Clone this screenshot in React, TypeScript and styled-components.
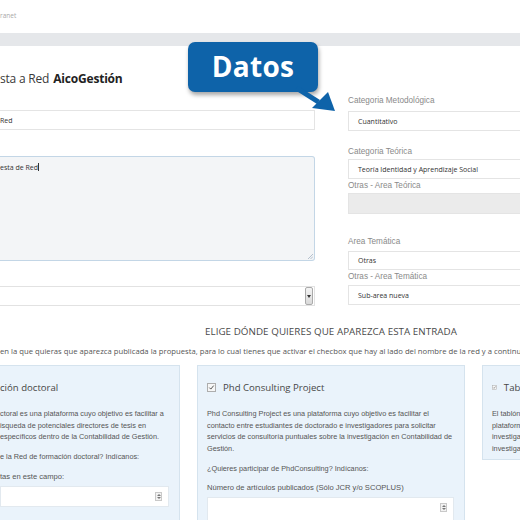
import React from 'react';
import styled, { createGlobalStyle } from 'styled-components';

const GlobalStyle = createGlobalStyle`
  html, body {
    margin:0;
    padding:0;
    background:#fff;
  }
  body {
    font-family:"Open Sans", "Liberation Sans", Arial, sans-serif;
    color:#444;
  }
`

const Page = styled.div`
  position:relative;
  width:520px;
  height:520px;
  overflow:hidden;
  background:#fff;
`

const TopHeader = styled.div`
  height:33px;
  display:flex;
  align-items:center;
  font-size:6.5px;
  color:#a9a9a9;
  span {
    margin-top:-3px;
  }
`

const GrayBar = styled.div`
  height:13px;
  background:#e5e7ea;
`

const FormGrid = styled.div`
  display:grid;
  grid-template-columns:315px 220px;
  column-gap:33px;
  width:570px;
`

const Column = styled.div`
  display:flex;
  flex-direction:column;
`

const Title = styled.h2`
  margin:0;
  height:64px;
  display:flex;
  align-items:center;
  font-size:12px;
  font-weight:400;
  color:#3a3a3a;
  letter-spacing:-0.2px;
  b {
    font-weight:700;
    color:#222;
    margin-left:4px;
  }
`

const TextInput = styled.div<{ $gap?: number; $muted?: boolean; $height?: number }>`
  margin-top:${({ $gap }) => $gap || 0}px;
  height:${({ $height }) => $height || 20}px;
  box-sizing:border-box;
  border:1px solid #e4e4e4;
  background:${({ $muted }) => ($muted ? '#ebebeb' : '#fff')};
  display:flex;
  align-items:center;
  padding-left:9px;
  font-size:7px;
  color:#333;
  &.flush {
    padding-left:0;
    border-left:none;
  }
`

const TextArea = styled.div`
  margin-top:26px;
  height:105px;
  box-sizing:border-box;
  position:relative;
  border:1px solid #c3d6e6;
  border-left:none;
  border-radius:0 3px 3px 0;
  background:#f3f5f7;
  font-size:7px;
  color:#333;
  padding-top:6px;
  .caret {
    display:inline-block;
    width:1px;
    height:8px;
    background:#333;
    vertical-align:-1px;
  }
  .grip {
    position:absolute;
    right:1px;
    bottom:1px;
  }
`

const ListSelect = styled.div`
  margin-top:25px;
  height:20px;
  box-sizing:border-box;
  border:1px solid #e2e2e2;
  border-left:none;
  display:flex;
  justify-content:flex-end;
  align-items:center;
  padding-right:1px;
  .arrow {
    width:8px;
    height:18px;
    box-sizing:border-box;
    border:1px solid #aaa;
    border-radius:2px;
    background:linear-gradient(#f4f4f4, #d9d9d9);
    display:flex;
    align-items:center;
    justify-content:center;
  }
`

const FieldLabel = styled.div<{ $gap?: number }>`
  margin-top:${({ $gap }) => $gap || 0}px;
  height:14px;
  line-height:14px;
  font-family:"Liberation Sans", Arial, sans-serif;
  font-size:8.2px;
  color:#8a8a8a;
`

const Section = styled.div`
  margin-top:19px;
`

const SectionHeading = styled.h3`
  margin:0 0 0 205px;
  height:14px;
  line-height:14px;
  font-size:9.8px;
  font-weight:400;
  color:#4a4a4a;
  white-space:nowrap;
  letter-spacing:0.05px;
`

const Intro = styled.p`
  margin:6px 0 0;
  height:12px;
  line-height:12px;
  font-size:7.7px;
  color:#555;
  white-space:nowrap;
`

const CardRow = styled.div`
  margin-top:8px;
  display:flex;
  align-items:flex-start;
  gap:17px;
`

const Card = styled.div<{ $width: number; $height: number; $first?: boolean }>`
  flex:none;
  width:${({ $width }) => $width}px;
  height:${({ $height }) => $height}px;
  box-sizing:border-box;
  background:#eaf3fb;
  border:1px solid #d5e3ee;
  ${({ $first }) => ($first ? 'border-left:none;' : '')}
  padding:13px 10px 0 ${({ $first }) => ($first ? 0 : 9)}px;
  overflow:hidden;
`

const CardTitle = styled.div`
  display:flex;
  align-items:center;
  gap:7px;
  height:16px;
  font-size:9.6px;
  color:#474747;
  white-space:nowrap;
`

const CardText = styled.p<{ $gap?: number }>`
  margin:${({ $gap }) => $gap || 0}px 0 0;
  font-family:"Liberation Sans", Arial, sans-serif;
  font-size:7.3px;
  line-height:11.7px;
  color:#555;
  white-space:nowrap;
`

const CardLabel = styled.p<{ $gap?: number }>`
  margin:${({ $gap }) => $gap || 0}px 0 0;
  font-family:"Liberation Sans", Arial, sans-serif;
  font-size:7.6px;
  line-height:12px;
  color:#555;
  white-space:nowrap;
`

const NumberInput = styled.div<{ $height: number }>`
  margin-top:3px;
  height:${({ $height }) => $height}px;
  box-sizing:border-box;
  background:#fff;
  border:1px solid #e2e9ef;
  display:flex;
  justify-content:flex-end;
  align-items:flex-start;
  padding:5px 6px 0 0;
`

const Spinner = styled.span`
  display:flex;
  flex-direction:column;
  justify-content:center;
  align-items:center;
  gap:1px;
  width:7px;
  height:9px;
  box-sizing:border-box;
  border:1px solid #c9c9c9;
  background:#f2f2f2;
`

const Callout = styled.div`
  position:absolute;
  left:188px;
  top:42px;
  width:130px;
  height:50px;
  border-radius:7px;
  background:#0e63a9;
  box-shadow:1px 3px 4px rgba(0,0,0,0.35);
  display:flex;
  align-items:center;
  justify-content:center;
  font-size:28px;
  font-weight:700;
  color:#fff;
  letter-spacing:0.3px;
  padding-bottom:2px;
  box-sizing:border-box;
`

const CalloutArrow = styled.svg`
  position:absolute;
  left:290px;
  top:80px;
`

const Check = () => (
  <svg width="9" height="9" viewBox="0 0 9 9">
    <rect x="0.5" y="0.5" width="8" height="8" fill="#f7f7f7" stroke="#adadad" />
    <path d="M2.3 4.6 L3.8 6.1 L6.7 2.6" fill="none" stroke="#555" strokeWidth="1" />
  </svg>
)

const SpinBox = () => (
  <Spinner>
    <svg width="4" height="2" viewBox="0 0 4 2"><path d="M0 2 L2 0 L4 2 Z" fill="#777" /></svg>
    <svg width="4" height="2" viewBox="0 0 4 2"><path d="M0 0 L2 2 L4 0 Z" fill="#777" /></svg>
  </Spinner>
)

const App = () => {
  return (
    <>
      <GlobalStyle />
      <Page>
        <TopHeader><span>ranet</span></TopHeader>
        <GrayBar />
        <FormGrid>
          <Column>
            <Title>sta a Red<b>AicoGestión</b></Title>
            <TextInput className="flush">Red</TextInput>
            <TextArea>
              esta de Red<span className="caret" />
              <svg className="grip" width="5" height="5" viewBox="0 0 5 5">
                <path d="M5 0 L0 5 M5 2.5 L2.5 5" stroke="#9ab" strokeWidth="0.7" />
              </svg>
            </TextArea>
            <ListSelect>
              <span className="arrow">
                <svg width="4" height="3" viewBox="0 0 4 3"><path d="M0 0 L4 0 L2 3 Z" fill="#333" /></svg>
              </span>
            </ListSelect>
          </Column>
          <Column>
            <FieldLabel $gap={48}>Categoria Metodológica</FieldLabel>
            <TextInput $gap={3}>Cuantitativo</TextInput>
            <FieldLabel $gap={14}>Categoria Teórica</FieldLabel>
            <TextInput $gap={0}>Teoría Identidad y Aprendizaje Social</TextInput>
            <FieldLabel>Otras - Area Teórica</FieldLabel>
            <TextInput $gap={0} $muted $height={21} />
            <FieldLabel $gap={21}>Area Temática</FieldLabel>
            <TextInput $gap={2} $height={19}>Otras</TextInput>
            <FieldLabel>Otras - Area Temática</FieldLabel>
            <TextInput $gap={1}>Sub-area nueva</TextInput>
          </Column>
        </FormGrid>

        <Section>
          <SectionHeading>ELIGE DÓNDE QUIERES QUE APAREZCA ESTA ENTRADA</SectionHeading>
          <Intro>
            en la que quieras que aparezca publicada la propuesta, para lo cual tienes que activar el checbox que hay al lado del nombre de la red y a continuación
          </Intro>
          <CardRow>
            <Card $width={180} $height={170} $first>
              <CardTitle>ción doctoral</CardTitle>
              <CardText $gap={13}>
                ctoral es una plataforma cuyo objetivo es facilitar a<br />
                isqueda de potenciales directores de tesis en<br />
                específicos dentro de la Contabilidad de Gestión.
              </CardText>
              <CardText $gap={8}>e la Red de formación doctoral? Indícanos:</CardText>
              <CardLabel $gap={8}>tas en este campo:</CardLabel>
              <NumberInput $height={21}><SpinBox /></NumberInput>
            </Card>
            <Card $width={268} $height={170}>
              <CardTitle><Check />Phd Consulting Project</CardTitle>
              <CardText $gap={13}>
                Phd Consulting Project es una plataforma cuyo objetivo es facilitar el<br />
                contacto entre estudiantes de doctorado e investigadores para solicitar<br />
                servicios de consultoría puntuales sobre la investigación en Contabilidad de<br />
                Gestión.
              </CardText>
              <CardText $gap={8}>¿Quieres participar de PhdConsulting? Indícanos:</CardText>
              <CardLabel $gap={7}>Número de artículos publicados (Sólo JCR y/o SCOPLUS)</CardLabel>
              <NumberInput $height={40}><SpinBox /></NumberInput>
            </Card>
            <Card $width={120} $height={95}>
              <CardTitle><Check />Tablón de anuncios</CardTitle>
              <CardText $gap={13}>
                El tablón de anuncios es una<br />
                plataforma para difundir<br />
                investigadores y grupos de<br />
                investigación de la red
              </CardText>
            </Card>
          </CardRow>
        </Section>

        <Callout>Datos</Callout>
        <CalloutArrow width="60" height="40" viewBox="0 0 60 40">
          <path d="M8 6 L30 20 L27 24 L5 10 Z" fill="#0e63a9" />
          <path d="M22 28 L38 12 L45 31 Z" fill="#0e63a9" />
        </CalloutArrow>
      </Page>
    </>
  );
}

export default App;
